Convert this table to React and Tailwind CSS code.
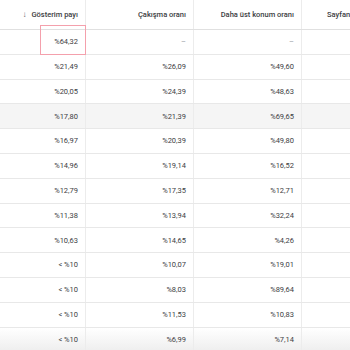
const rows = [
  ['%64,32', '–', '–'],
  ['%21,49', '%26,09', '%49,60'],
  ['%20,05', '%24,39', '%48,63'],
  ['%17,80', '%21,39', '%69,65'],
  ['%16,97', '%20,39', '%49,80'],
  ['%14,96', '%19,14', '%16,52'],
  ['%12,79', '%17,35', '%12,71'],
  ['%11,38', '%13,94', '%32,24'],
  ['%10,63', '%14,65', '%4,26'],
  ['< %10', '%10,07', '%19,01'],
  ['< %10', '%8,03', '%89,64'],
  ['< %10', '%11,53', '%10,83'],
  ['< %10', '%6,99', '%7,14'],
]

function Cell({ children, w, className = '' }) {
  return (
    <div className={`${w} shrink-0 h-full flex items-center justify-end pr-[7px] border-r border-[#ececec] ${className}`}>
      {children}
    </div>
  )
}

export default function App() {
  return (
    <div className="w-[350px] h-[350px] overflow-hidden bg-white text-[7.5px] text-[#3c4043]" style={{ fontFamily: 'Roboto, "Liberation Sans", sans-serif' }}>
      <div className="flex h-[30px] border-b border-[#e0e0e0] font-medium text-[#3c4043]">
        <Cell w="w-[86px]">
          <span className="mr-[5px] text-[#5f6368] text-[8px]">↓</span>Gösterim payı
        </Cell>
        <Cell w="w-[108px]">Çakışma oranı</Cell>
        <Cell w="w-[108px]">Daha üst konum oranı</Cell>
        <div className="flex-1 min-w-0 h-full flex items-center pl-[25px] whitespace-nowrap overflow-hidden">Sayfanın üst kısmı oranı</div>
      </div>
      {rows.map((r, i) => (
        <div
          key={i}
          className={`relative flex h-[24.8px] border-b border-[#e8e8e8] ${i === 3 ? 'bg-[#f5f5f5]' : ''} ${i === 12 ? 'bg-gradient-to-b from-white to-[#eeeeee]' : ''}`}
        >
          <Cell w="w-[86px]" className="relative">
            {i === 0 && (
              <div className="absolute left-[40px] right-[-1px] top-[-5px] bottom-[-1px] border border-[#f4a0ac]" />
            )}
            {r[0]}
          </Cell>
          <Cell w="w-[108px]" className={r[1] === '–' ? 'text-[#9aa0a6]' : ''}>{r[1]}</Cell>
          <Cell w="w-[108px]" className={r[2] === '–' ? 'text-[#9aa0a6]' : ''}>{r[2]}</Cell>
          <div className="flex-1" />
        </div>
      ))}
    </div>
  )
}
